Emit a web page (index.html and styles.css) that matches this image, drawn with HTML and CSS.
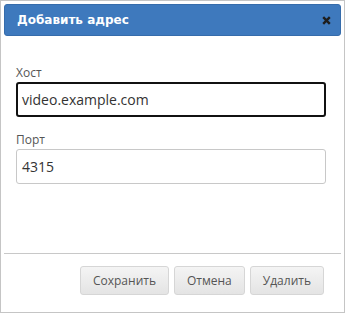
FILE: index.html
```html
<!doctype html>
<html lang="ru">
  <head>
    <meta charset="UTF-8" />
    <title>Добавить адрес</title>
    <link rel="stylesheet" href="styles.css">
  </head>
  <body>
    <div class="dialog">
      <div class="dialog-title">
        <span>Добавить адрес</span>
        <svg class="close" width="9" height="9" viewBox="0 0 9 9">
          <path d="M1.2 1.2 L7.8 7.8 M7.8 1.2 L1.2 7.8" stroke="#1e1e1e" stroke-width="2.4" />
        </svg>
      </div>

      <div class="dialog-body">
        <div class="field">
          <label>Хост</label>
          <div class="input focused">video.example.com</div>
        </div>
        <div class="field">
          <label>Порт</label>
          <div class="input">4315</div>
        </div>
      </div>

      <div class="dialog-footer">
        <button class="btn">Сохранить</button>
        <button class="btn">Отмена</button>
        <button class="btn">Удалить</button>
      </div>
    </div>
  </body>
</html>
```

FILE: styles.css
```css
body {
  margin: 0;
  padding: 0;
  font-family: "Open Sans", "Liberation Sans", sans-serif;
  background: white;
}

.dialog {
  width: 345px;
  height: 313px;
  box-sizing: border-box;
  border: 1px solid #c5c5c5;
  padding: 3px;
  display: flex;
  flex-direction: column;
  background: white;
}

.dialog-title {
  height: 32px;
  box-sizing: border-box;
  background: #3e79bd;
  border: 1px solid #366cab;
  border-radius: 3px;
  display: flex;
  align-items: center;
  justify-content: space-between;
  padding: 0 9px 0 12px;
  color: white;
  font-family: "DejaVu Sans", Verdana, sans-serif;
  font-weight: bold;
  font-size: 12px;
}

.dialog-body {
  flex: 1;
  padding: 29px 15px 0 12px;
}

.field {
  margin-bottom: 15px;
}

.field label {
  display: block;
  font-size: 12px;
  line-height: 16px;
  color: #555;
  margin-bottom: 1px;
}

.input {
  height: 35px;
  box-sizing: border-box;
  border: 1px solid #c8c8c8;
  border-radius: 3px;
  padding: 0 5px;
  display: flex;
  align-items: center;
  font-size: 14px;
  color: #333;
}

.input.focused {
  border: 2px solid #111;
  padding: 0 4px;
}

.dialog-footer {
  border-top: 1px solid #c8c8c8;
  padding: 12px 17px 14px 0;
  display: flex;
  justify-content: flex-end;
  gap: 5px;
}

.btn {
  height: 29px;
  padding: 0 12px;
  border: 1px solid #d6d6d6;
  border-radius: 3px;
  background: linear-gradient(#f4f4f4, #e4e4e4);
  font-family: "Open Sans", "Liberation Sans", sans-serif;
  font-size: 12px;
  color: #555;
}
```
